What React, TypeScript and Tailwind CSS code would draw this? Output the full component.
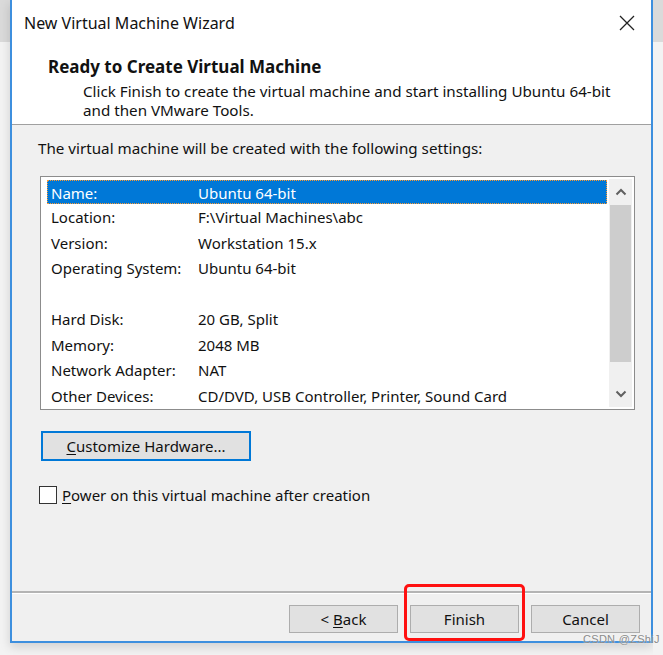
import React from 'react';

const rows: { label: string; value: string }[] = [
  { label: 'Name:', value: 'Ubuntu 64-bit' },
  { label: 'Location:', value: 'F:\\Virtual Machines\\abc' },
  { label: 'Version:', value: 'Workstation 15.x' },
  { label: 'Operating System:', value: 'Ubuntu 64-bit' },
  { label: '', value: '' },
  { label: 'Hard Disk:', value: '20 GB, Split' },
  { label: 'Memory:', value: '2048 MB' },
  { label: 'Network Adapter:', value: 'NAT' },
  { label: 'Other Devices:', value: 'CD/DVD, USB Controller, Printer, Sound Card' },
];

const Chevron: React.FC<{ up?: boolean }> = ({ up }) => (
  <svg width="12" height="8" viewBox="0 0 12 8" className={up ? '' : 'rotate-180'}>
    <path d="M1.5 6.5 L6 2 L10.5 6.5" fill="none" stroke="#606060" strokeWidth="2" />
  </svg>
);

const WinButton: React.FC<{ children: React.ReactNode }> = ({ children }) => (
  <div className="w-[109px] h-[28px] flex items-center justify-center bg-[#e1e1e1] border border-[#adadad] text-[15px] text-[#111]">
    {children}
  </div>
);

export default function App() {
  return (
    <div
      className="relative w-[663px] h-[655px] flex bg-[#f3f3f3] overflow-hidden"
      style={{ fontFamily: '"Noto Sans", "Open Sans", sans-serif' }}
    >
      {/* left strip behind window */}
      <div className="w-[10px] flex flex-col">
        <div className="h-[42px] bg-[#dadada]" />
        <div className="flex-1 bg-[#f3f3f3]" />
      </div>

      {/* window */}
      <div className="w-[643px] h-[643px] flex flex-col border-l-2 border-r-2 border-b-2 border-[#3d8fde] bg-[#f0f0f0] shadow-[0_4px_10px_rgba(0,0,0,0.15)]">
        {/* title + header */}
        <div className="h-[124px] bg-white flex flex-col">
          <div className="h-[45px] flex items-center justify-between pl-[12px] pr-[16px]">
            <span className="text-[16px] text-[#111]">New Virtual Machine Wizard</span>
            <svg width="16" height="16" viewBox="0 0 16 16">
              <path d="M1 1 L15 15 M15 1 L1 15" stroke="#222" strokeWidth="1.3" />
            </svg>
          </div>
          <div className="pl-[36px] text-[17px] font-bold text-[#111] leading-[22px] mt-[11px]">
            Ready to Create Virtual Machine
          </div>
          <div className="pl-[71px] text-[15.2px] text-[#111] leading-[19px] mt-[4px]">
            <div>Click Finish to create the virtual machine and start installing Ubuntu 64-bit</div>
            <div>and then VMware Tools.</div>
          </div>
        </div>
        <div className="h-[1px] bg-[#a0a0a0]" />

        {/* body */}
        <div className="h-[466px] flex flex-col pl-[26px] pr-[16px]">
          <div className="text-[15.2px] text-[#111] leading-[20px] mt-[13px]">
            The virtual machine will be created with the following settings:
          </div>

          <div className="mt-[18px] ml-[2px] h-[234px] border border-[#8c8c8c] bg-white flex p-[2px] overflow-hidden">
            <div className="flex-1 flex flex-col pl-[4px] pt-[1px]">
              {rows.map((r, i) => (
                <div
                  key={i}
                  className={`shrink-0 flex items-center pt-[2px] text-[15px] leading-none ${
                    i === 0
                      ? 'bg-[#0078d7] text-white border border-dotted border-[#ff9a30] h-[24px]'
                      : 'h-[25.5px] text-[#111]'
                  }`}
                >
                  <span className={i === 0 ? 'w-[150px] pl-[3px]' : 'w-[151px] pl-[4px]'}>{r.label}</span>
                  <span>{r.value}</span>
                </div>
              ))}
            </div>
            <div className="w-[23px] bg-[#f0f0f0] flex flex-col ml-[2px]">
              <div className="h-[26px] flex items-center justify-center">
                <Chevron up />
              </div>
              <div className="h-[157px] bg-[#cdcdcd] mx-[1px]" />
              <div className="flex-1" />
              <div className="h-[26px] flex items-center justify-center">
                <Chevron />
              </div>
            </div>
          </div>

          <div className="mt-[21px] ml-[3px] w-[210px] h-[30px] border-2 border-[#0078d7] bg-[#e1e1e1] flex items-center justify-center text-[15px] text-[#111]">
            <span>
              <span className="underline underline-offset-2">C</span>ustomize Hardware...
            </span>
          </div>

          <div className="mt-[23px] ml-[1px] flex items-center gap-[5px]">
            <div className="w-[18px] h-[18px] border border-[#333] bg-white" />
            <span className="text-[15px] text-[#111]">
              <span className="underline underline-offset-2">P</span>ower on this virtual machine after creation
            </span>
          </div>
        </div>

        <div className="h-[2px] bg-[#b4b4b4] border-b border-white box-content" />

        {/* footer */}
        <div className="flex-1 flex justify-end items-start pt-[11px] pr-[11px] gap-[12px]">
          <WinButton>
            &lt;&nbsp;<span className="underline underline-offset-2">B</span>ack
          </WinButton>
          <div className="relative">
            <WinButton>Finish</WinButton>
            <div className="absolute left-[-6px] top-[-21px] w-[121px] h-[57px] border-[3px] border-[#ff1010] rounded-[5px]" />
          </div>
          <WinButton>Cancel</WinButton>
        </div>
      </div>

      {/* right strip */}
      <div className="w-[10px] flex flex-col">
        <div className="h-[42px] bg-[#dadada]" />
        <div className="flex-1 bg-[#f3f3f3]" />
      </div>

      {/* watermark */}
      <div
        className="absolute left-[583px] top-[631px] text-[11px] text-[#8a8a8a] tracking-[0.3px]"
        style={{ fontFamily: '"Liberation Sans", sans-serif', textShadow: '0 0 2px #fff' }}
      >
        CSDN @ZShiJ
      </div>
    </div>
  );
}
